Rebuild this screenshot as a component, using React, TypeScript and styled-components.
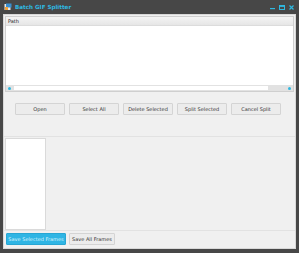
import React from "react";
import styled, { createGlobalStyle } from "styled-components";

const Global = createGlobalStyle`
  html, body { margin: 0; padding: 0; background: #ffffff; }
  body { font-family: "DejaVu Sans", "Liberation Sans", sans-serif; }
`;

const Window = styled.div`
  width: 299px;
  height: 253px;
  box-sizing: border-box;
  background: #474747;
  display: flex;
  flex-direction: column;
  padding: 0 3px 4px 3px;
`;

const TitleBar = styled.div`
  height: 14px;
  display: flex;
  align-items: center;
  padding-left: 1px;
  gap: 3px;
`;

const Title = styled.span`
  color: #2fb8e0;
  font-size: 5.6px;
  font-weight: bold;
  flex: 1;
`;

const Controls = styled.div`
  display: flex;
  gap: 4px;
  align-items: center;
  padding-right: 2px;
`;

const Body = styled.div`
  flex: 1;
  background: #f0f0f0;
  display: flex;
  flex-direction: column;
  border: 1px solid #d8d8d8;
`;

const Table = styled.div`
  margin: 1px 1px 0 1px;
  height: 74px;
  border: 1px solid #cfcfcf;
  background: #ffffff;
  display: flex;
  flex-direction: column;
`;

const Header = styled.div`
  height: 8px;
  background: linear-gradient(#f4f4f4, #e6e6e6);
  border-bottom: 1px solid #dcdcdc;
  font-size: 5px;
  color: #222;
  display: flex;
  align-items: center;
  padding-left: 2px;
`;

const TableArea = styled.div`
  flex: 1;
`;

const ScrollBar = styled.div`
  height: 6px;
  background: #e2e2e2;
  display: flex;
  align-items: center;
  padding: 0 2px;
  gap: 3px;
`;

const Thumb = styled.div`
  height: 4px;
  width: 254px;
  background: #ffffff;
  border: 0;
`;

const Spacer = styled.div`
  flex: 1;
`;

const ButtonRow = styled.div`
  display: flex;
  gap: 4px;
  padding: 11px 0 0 11px;
  height: 33px;
  border-bottom: 1px solid #e2e2e2;
`;

const Button = styled.button<{ $primary?: boolean; $w?: number }>`
  width: ${(p) => p.$w ?? 50}px;
  height: 12px;
  box-sizing: border-box;
  padding: 0;
  font-family: "DejaVu Sans", "Liberation Sans", sans-serif;
  font-size: 5px;
  color: ${(p) => (p.$primary ? "#d8f3fc" : "#333")};
  background: ${(p) => (p.$primary ? "#2fb5e4" : "#ececec")};
  border: 1px solid ${(p) => (p.$primary ? "#28a6d3" : "#d4d4d4")};
  border-radius: 1px;
  white-space: nowrap;
`;

const Lower = styled.div`
  flex: 1;
  display: flex;
  padding: 1px 0 0 1px;
  border-bottom: 1px solid #e2e2e2;
`;

const List = styled.div`
  width: 39px;
  background: #ffffff;
  border: 1px solid #dadada;
`;

const BottomBar = styled.div`
  height: 17px;
  display: flex;
  gap: 3px;
  padding: 2px 0 0 2px;
  box-sizing: border-box;
`;

const Dot = styled.div`
  width: 3px;
  height: 3px;
  border-radius: 50%;
  background: #2fb8e0;
`;

function AppIcon() {
  return (
    <svg width="8" height="8" viewBox="0 0 8 8">
      <rect x="0.5" y="1" width="6" height="6" fill="#e9e9e9" />
      <rect x="2" y="0.5" width="5.5" height="4" fill="#3a8fd0" />
      <rect x="1" y="4" width="3" height="3" fill="#f2a33a" />
    </svg>
  );
}

function WinControls() {
  return (
    <Controls>
      <svg width="5" height="5" viewBox="0 0 5 5">
        <rect x="0" y="3" width="5" height="1.2" fill="#2fb8e0" />
      </svg>
      <svg width="6" height="5" viewBox="0 0 6 5">
        <rect x="0.5" y="0.5" width="5" height="4" fill="none" stroke="#2fb8e0" />
        <rect x="0.5" y="0.5" width="5" height="1.4" fill="#2fb8e0" />
      </svg>
      <svg width="5" height="5" viewBox="0 0 5 5">
        <path d="M0.5 0.5 L4.5 4.5 M4.5 0.5 L0.5 4.5" stroke="#2fb8e0" strokeWidth="1.2" />
      </svg>
    </Controls>
  );
}

export default function App() {
  return (
    <>
      <Global />
      <Window>
        <TitleBar>
          <AppIcon />
          <Title>Batch GIF Splitter</Title>
          <WinControls />
        </TitleBar>
        <Body>
          <Table>
            <Header>Path</Header>
            <TableArea />
            <ScrollBar>
              <Dot />
              <Thumb />
              <Spacer />
              <Dot />
            </ScrollBar>
          </Table>
          <ButtonRow>
            <Button>Open</Button>
            <Button>Select All</Button>
            <Button>Delete Selected</Button>
            <Button>Split Selected</Button>
            <Button>Cancel Split</Button>
          </ButtonRow>
          <Lower>
            <List />
          </Lower>
          <BottomBar>
            <Button $primary $w={60}>Save Selected Frames</Button>
            <Button $w={46}>Save All Frames</Button>
          </BottomBar>
        </Body>
      </Window>
    </>
  );
}
